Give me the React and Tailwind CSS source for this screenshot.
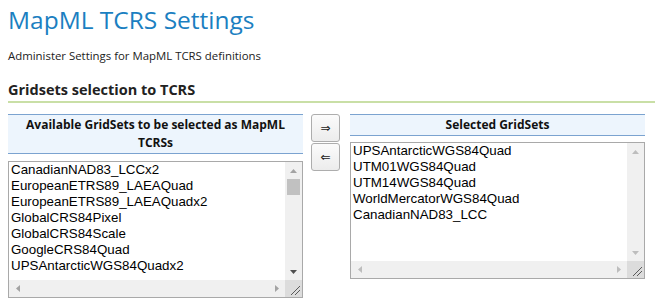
import React from "react";

const sans = { fontFamily: '"Open Sans", "DejaVu Sans", sans-serif' };
const arial = { fontFamily: '"Liberation Sans", Arial, sans-serif' };

function Tri({ dir, color = "#a3a3a3" }) {
  const pts = {
    up: "0,4 3.5,0 7,4",
    down: "0,0 3.5,4 7,0",
    left: "4,0 0,3.5 4,7",
    right: "0,0 4,3.5 0,7",
  }[dir];
  const w = dir === "up" || dir === "down" ? 7 : 4;
  const h = dir === "up" || dir === "down" ? 4 : 7;
  return (
    <svg width={w} height={h} viewBox={`0 0 ${w} ${h}`}>
      <polygon points={pts} fill={color} />
    </svg>
  );
}

function ListBox({ items, thumb, arrowV, arrowH }) {
  return (
    <div className="h-[137px] border border-[#a9a9a9] bg-white flex flex-col" style={arial}>
      <div className="flex flex-1 min-h-0">
        <div className="flex-1 pl-[2px] text-[13.33px] leading-[16px] text-black overflow-hidden">
          {items.map((t) => (
            <div key={t} className="whitespace-nowrap">{t}</div>
          ))}
        </div>
        <div className="w-[17px] bg-[#f0f0f0] flex flex-col items-center">
          <div className="h-[17px] flex items-center justify-center"><Tri dir="up" color={arrowV} /></div>
          <div className="flex-1 w-full px-[2px]">
            {thumb && <div className="h-[16px] bg-[#c1c1c1]" />}
          </div>
          <div className="h-[17px] flex items-center justify-center"><Tri dir="down" color={thumb ? "#505050" : arrowV} /></div>
        </div>
      </div>
      <div className="h-[17px] flex bg-[#f0f0f0]">
        <div className="w-[17px] flex items-center justify-center"><Tri dir="left" color={arrowH} /></div>
        <div className="flex-1" />
        <div className="w-[17px] flex items-center justify-center"><Tri dir="right" color={arrowH} /></div>
        <div className="w-[17px] bg-[#dcdcdc] flex items-end justify-end">
          <svg width="17" height="17" viewBox="0 0 17 17">
            <line x1="6" y1="15" x2="15" y2="6" stroke="#5a5a5a" strokeWidth="1" />
            <line x1="10" y1="15" x2="15" y2="10" stroke="#5a5a5a" strokeWidth="1" />
          </svg>
        </div>
      </div>
    </div>
  );
}

export default function App() {
  const left = [
    "CanadianNAD83_LCCx2",
    "EuropeanETRS89_LAEAQuad",
    "EuropeanETRS89_LAEAQuadx2",
    "GlobalCRS84Pixel",
    "GlobalCRS84Scale",
    "GoogleCRS84Quad",
    "UPSAntarcticWGS84Quadx2",
  ];
  const right = [
    "UPSAntarcticWGS84Quad",
    "UTM01WGS84Quad",
    "UTM14WGS84Quad",
    "WorldMercatorWGS84Quad",
    "CanadianNAD83_LCC",
  ];
  return (
    <div className="w-[655px] h-[304px] overflow-hidden bg-white pl-2" style={sans}>
      <h1 className="text-[24.5px] leading-[36px] text-[#1b7fc1] pt-[2px]">MapML TCRS Settings</h1>
      <p className="text-[11.4px] leading-[16px] text-[#222] mt-[10px]">Administer Settings for MapML TCRS definitions</p>
      <h2 className="text-[14.5px] leading-[18px] font-bold text-[#222] mt-[17px] pb-[2px] border-b-2 border-[#c9dfa6]">Gridsets selection to TCRS</h2>
      <div className="flex mt-[11px]">
        <div className="w-[295px]">
          <div className="border-y border-[#7ba3d0] bg-[#edf5fd] text-center font-bold text-[12px] leading-[18px] text-[#111] pt-[1px] pb-[1px] px-3">
            Available GridSets to be selected as MapML TCRSs
          </div>
          <div className="mt-[7px]">
            <ListBox items={left} thumb arrowV="#a3a3a3" arrowH="#a3a3a3" />
          </div>
        </div>
        <div className="ml-[8px] w-[29px] flex flex-col gap-[1px]">
          {["⇒", "⇐"].map((g) => (
            <div key={g} className="h-[28px] border border-[#adadad] rounded-[3px] bg-gradient-to-b from-[#fbfbfb] to-[#ececec] flex items-center justify-center text-[12px] text-[#222]" style={{ fontFamily: '"DejaVu Sans", sans-serif' }}>
              {g}
            </div>
          ))}
        </div>
        <div className="ml-[10px] w-[295px]">
          <div className="border-y border-[#7ba3d0] bg-[#edf5fd] text-center font-bold text-[12px] leading-[18px] text-[#111] pt-[1px] pb-[1px]">
            Selected GridSets
          </div>
          <div className="mt-[6px]">
            <ListBox items={right} arrowV="#bdbdbd" arrowH="#bdbdbd" />
          </div>
        </div>
      </div>
    </div>
  );
}
